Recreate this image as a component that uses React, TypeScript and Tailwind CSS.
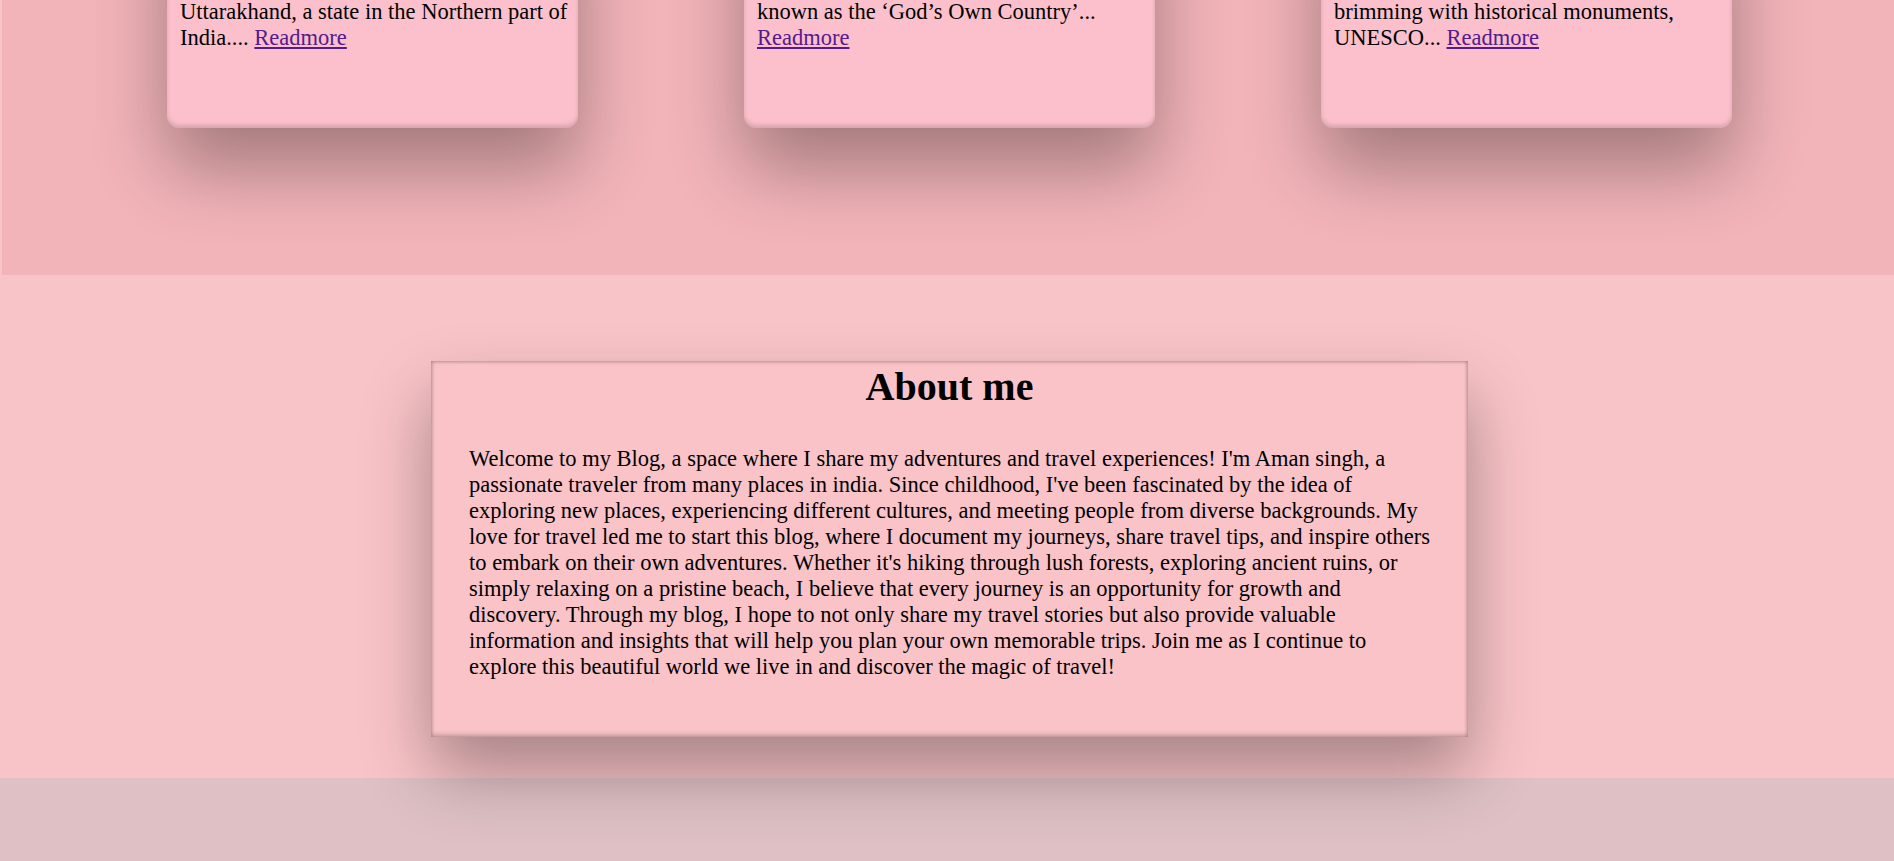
import React from "react";

type Place = {
  title: string;
  lead: string;
  rest: string;
};

const places: Place[] = [
  {
    title: "Dehradun",
    lead: "Dehradun is the capital and the most populous city of the Indian state of",
    rest: "Uttarakhand, a state in the Northern part of India....",
  },
  {
    title: "Kerala",
    lead: "Kerala is a state on the southwestern Malabar Coast of India, popularly",
    rest: "known as the ‘God’s Own Country’...",
  },
  {
    title: "Delhi",
    lead: "Delhi, India’s capital territory, is a massive metropolitan area",
    rest: "brimming with historical monuments, UNESCO...",
  },
];

const about =
  "Welcome to my Blog, a space where I share my adventures and travel experiences! I'm Aman singh, a passionate traveler from many places in india. Since childhood, I've been fascinated by the idea of exploring new places, experiencing different cultures, and meeting people from diverse backgrounds. My love for travel led me to start this blog, where I document my journeys, share travel tips, and inspire others to embark on their own adventures. Whether it's hiking through lush forests, exploring ancient ruins, or simply relaxing on a pristine beach, I believe that every journey is an opportunity for growth and discovery. Through my blog, I hope to not only share my travel stories but also provide valuable information and insights that will help you plan your own memorable trips. Join me as I continue to explore this beautiful world we live in and discover the magic of travel!";

function PlaceCard({ place }: { place: Place }) {
  return (
    <div className="w-[411px] shrink-0 rounded-[12px] bg-[#fbc0cb] pl-[13px] pr-[4px] pt-4 pb-[77px] shadow-[inset_0_-3px_4px_rgba(0,0,0,0.14),0_40px_75px_rgba(0,0,0,0.33)]">
      <h2 className="mb-3 text-[30px] font-bold leading-[normal]">{place.title}</h2>
      <p className="leading-[normal]">
        {place.lead}
        <br />
        {place.rest}{" "}
        <a href="#" className="text-[#551a8b] underline">
          Readmore
        </a>
      </p>
    </div>
  );
}

export default function App() {
  return (
    <div className="min-h-screen overflow-hidden bg-[#dfc1c5] font-['Liberation_Serif',serif] text-[22.5px] text-black">
      <div className="bg-[#f9c4c8]">
        {/* ****** destinations ****** */}
        <section className="ml-[2px] flex h-[275px] items-end justify-center gap-[166px] bg-[#f2b4b9] pb-[147px] pl-[3px]">
          {places.map((p) => (
            <PlaceCard key={p.title} place={p} />
          ))}
        </section>

        {/* ****** about ****** */}
        <section className="flex justify-center pl-[5px] pt-[86px] pb-[41px]">
          <div className="w-[1037px] bg-[#f9c3c8] pl-[38px] pr-[32px] pt-[2px] pb-[57px] shadow-[inset_0_2px_3px_rgba(0,0,0,0.12),inset_0_-3px_4px_rgba(0,0,0,0.16),inset_2px_0_3px_rgba(0,0,0,0.1),inset_-2px_0_3px_rgba(0,0,0,0.1),0_35px_65px_rgba(0,0,0,0.33)]">
            <h1 className="pr-[6px] text-center text-[40px] font-bold leading-[normal]">About me</h1>
            <p className="mt-[36px] leading-[normal]">{about}</p>
          </div>
        </section>
      </div>
    </div>
  );
}
